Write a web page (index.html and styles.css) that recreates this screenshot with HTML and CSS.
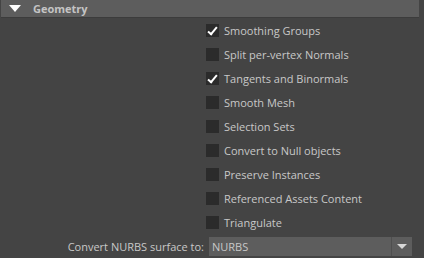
FILE: index.html
```html
<!DOCTYPE html>
<html lang="en">
<head>
    <meta charset="UTF-8">
    <title>Geometry</title>
    <link rel="stylesheet" href="styles.css">
</head>
<body>
    <div class="section-header">
        <span class="arrow"></span>
        <span class="section-title">Geometry</span>
    </div>
    <div class="options">
        <label class="option"><span class="box checked"></span>Smoothing Groups</label>
        <label class="option"><span class="box"></span>Split per-vertex Normals</label>
        <label class="option"><span class="box checked"></span>Tangents and Binormals</label>
        <label class="option"><span class="box"></span>Smooth Mesh</label>
        <label class="option"><span class="box"></span>Selection Sets</label>
        <label class="option"><span class="box"></span>Convert to Null objects</label>
        <label class="option"><span class="box"></span>Preserve Instances</label>
        <label class="option"><span class="box"></span>Referenced Assets Content</label>
        <label class="option"><span class="box"></span>Triangulate</label>
    </div>
    <div class="field-row">
        <span class="field-label">Convert NURBS surface to:</span>
        <div class="dropdown">
            <span class="dropdown-value">NURBS</span>
            <span class="dropdown-btn"><span class="caret"></span></span>
        </div>
    </div>
</body>
</html>
```

FILE: styles.css
```css
body {
    margin: 0;
    background-color: #444444;
    font-family: "Open Sans", "DejaVu Sans", sans-serif;
    font-size: 11px;
    color: #c8c8c8;
    overflow: hidden;
}
.section-header {
    display: flex;
    align-items: center;
    height: 17px;
    margin: 0 5px 0 1px;
    background-color: #5d5d5d;
    border-bottom: 1px solid #3c3c3c;
}
.arrow {
    width: 0;
    height: 0;
    margin-left: 8px;
    border-left: 6px solid transparent;
    border-right: 6px solid transparent;
    border-top: 7px solid #ffffff;
}
.section-title {
    margin-left: 12px;
    font-weight: bold;
    color: #c4c4c4;
}
.options {
    display: flex;
    flex-direction: column;
    padding-left: 206px;
}
.option {
    display: flex;
    align-items: center;
    height: 24px;
}
.box {
    position: relative;
    width: 13px;
    height: 13px;
    margin-right: 5px;
    background-color: #2b2b2b;
}
.box.checked::after {
    content: "";
    position: absolute;
    left: 4px;
    top: 1px;
    width: 3px;
    height: 8px;
    border-right: 2px solid #ffffff;
    border-bottom: 2px solid #ffffff;
    transform: rotate(40deg);
}
.field-row {
    display: flex;
    align-items: center;
    margin-top: 3px;
}
.field-label {
    width: 204px;
    text-align: right;
    margin-right: 5px;
}
.dropdown {
    display: flex;
    width: 203px;
    height: 19px;
    background-color: #5d5d5d;
}
.dropdown-value {
    flex: 1;
    padding-left: 3px;
    line-height: 19px;
}
.dropdown-btn {
    display: flex;
    align-items: center;
    justify-content: center;
    width: 20px;
    border-left: 1px solid #4f4f4f;
}
.caret {
    width: 0;
    height: 0;
    border-left: 5px solid transparent;
    border-right: 5px solid transparent;
    border-top: 5px solid #d8d8d8;
}
```
